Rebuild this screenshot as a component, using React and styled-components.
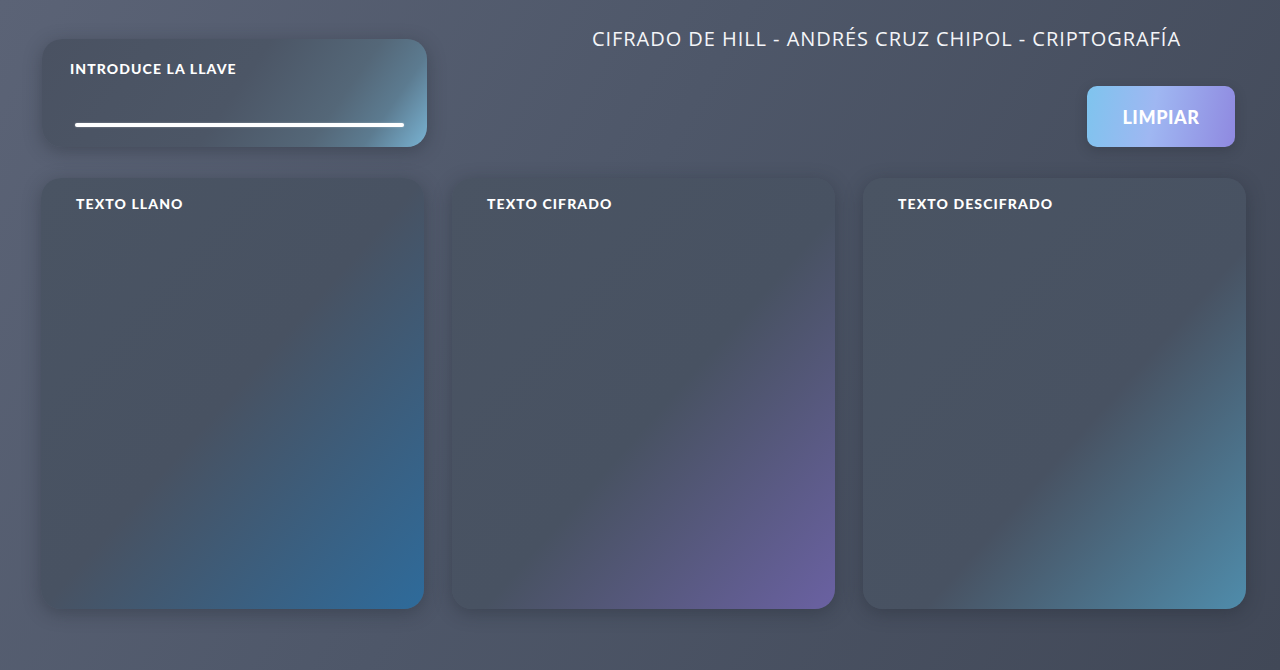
import React from 'react';
import styled, { createGlobalStyle } from 'styled-components';

const GlobalStyle = createGlobalStyle`
  html, body {
    margin: 0;
    padding: 0;
    height: 100%;
  }
  body {
    font-family: "Open Sans", "Liberation Sans", sans-serif;
    color: #ffffff;
    background: linear-gradient(120deg, #5b6376 0%, #4e5769 45%, #414857 100%);
    min-height: 670px;
  }
`;

const Page = styled.div`
  width: 1280px;
  height: 670px;
  box-sizing: border-box;
  padding: 39px 34px 0 41px;
  display: flex;
  flex-direction: column;
  gap: 31px;
`;

const Header = styled.header`
  display: flex;
  justify-content: space-between;
  align-items: flex-start;
`;

const KeyCard = styled.div`
  width: 385px;
  height: 108px;
  box-sizing: border-box;
  margin-left: 1px;
  padding: 21px 24px 0 28px;
  border-radius: 20px;
  background: linear-gradient(
    125deg,
    #4a5262 0%,
    #4c5666 50%,
    #546778 74%,
    #5c7b90 86%,
    #79b3d3 100%
  );
  box-shadow: 0 4px 18px rgba(30, 34, 44, 0.35);
  display: flex;
  flex-direction: column;
`;

const Label = styled.span`
  font-family: "Lato", "Open Sans", sans-serif;
  font-weight: 900;
  font-size: 14px;
  letter-spacing: 1.1px;
  text-transform: uppercase;
  color: #ffffff;
`;

const Slider = styled.div`
  margin: 46px 0 0 5px;
  width: 329px;
  height: 4px;
  border-radius: 2px;
  background: #ffffff;
  box-shadow: 0 0 2px rgba(255, 255, 255, 0.4);
`;

const Side = styled.div`
  display: flex;
  flex-direction: column;
  align-items: flex-end;
  gap: 33px;
`;

const Title = styled.h1`
  margin: -14px 65px 0 0;
  font-family: "Open Sans", sans-serif;
  font-weight: 400;
  font-size: 20px;
  letter-spacing: 0.95px;
  line-height: 28px;
  color: #f4f5f8;
`;

const ClearButton = styled.button`
  margin-right: 11px;
  width: 148px;
  height: 61px;
  border: none;
  border-radius: 10px;
  background: linear-gradient(100deg, #7ec4ee 0%, #9fb7f2 45%, #8f89e0 100%);
  color: #ffffff;
  font-family: "Lato", sans-serif;
  font-weight: 900;
  font-size: 18px;
  letter-spacing: 0.6px;
  box-shadow: 0 4px 12px rgba(30, 34, 44, 0.25);
  cursor: pointer;
`;

const Grid = styled.main`
  display: grid;
  grid-template-columns: repeat(3, 383px);
  column-gap: 28px;
`;

const tints = {
  blue: '#2e6b9b',
  purple: '#6a61a2',
  teal: '#4f8cab',
};

const stops = {
  blue: '50%',
  purple: '54%',
  teal: '58%',
};

const TextCard = styled.section`
  height: 431px;
  box-sizing: border-box;
  padding: 14px 35px;
  border-radius: 20px;
  background: linear-gradient(
    to bottom right,
    #4a5463 0%,
    #485262 ${({ tint }) => stops[tint]},
    ${({ tint }) => tints[tint]} 100%
  );
  box-shadow: 0 4px 18px rgba(30, 34, 44, 0.35);
`;

const cards = [
  { label: 'Texto llano', tint: 'blue' },
  { label: 'Texto cifrado', tint: 'purple' },
  { label: 'Texto descifrado', tint: 'teal' },
];

export default function App() {
  return (
    <>
      <GlobalStyle />
      <Page>
        <Header>
          <KeyCard>
            <Label>Introduce la llave</Label>
            <Slider />
          </KeyCard>
          <Side>
            <Title>CIFRADO DE HILL - ANDRÉS CRUZ CHIPOL - CRIPTOGRAFÍA</Title>
            <ClearButton>LIMPIAR</ClearButton>
          </Side>
        </Header>
        <Grid>
          {cards.map(({ label, tint }) => (
            <TextCard key={label} tint={tint}>
              <Label>{label}</Label>
            </TextCard>
          ))}
        </Grid>
      </Page>
    </>
  );
}
